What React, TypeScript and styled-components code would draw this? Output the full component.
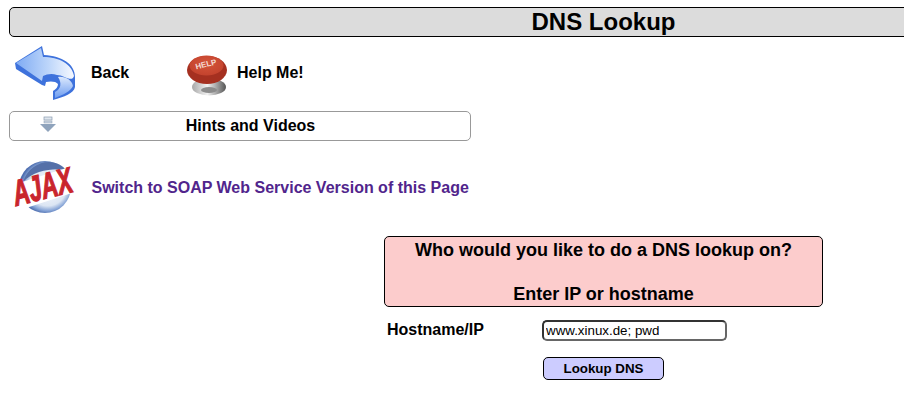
import React from 'react'
import styled, { createGlobalStyle } from 'styled-components'

const GlobalStyle = createGlobalStyle`
	html, body {
		margin: 0;
		padding: 0;
		overflow: hidden;
		background: #fff;
		font-family: "Liberation Sans", Arial, sans-serif;
		color: #000;
	}
`

const Page = styled.div`
	width: 1188px;
	height: 406px;
	padding: 7px 0 0 9px;
	box-sizing: content-box;
`

const TitleBar = styled.h1`
	box-sizing: border-box;
	margin: 0;
	height: 30px;
	padding-left: 1px;
	line-height: 28px;
	font-size: 24px;
	font-weight: bold;
	text-align: center;
	background: #dcdcdc;
	border: 1px solid #000;
	border-radius: 5px;
`

const NavRow = styled.div`
	display: flex;
	align-items: center;
	height: 56px;
	margin-top: 8px;
	padding-left: 5px;
`

const NavLink = styled.a<{ $width: number; $gap: number }>`
	display: flex;
	align-items: center;
	gap: ${(p) => p.$gap}px;
	width: ${(p) => p.$width}px;
	font-size: 16px;
	font-weight: bold;
	color: #000;
`

const HintsBar = styled.div`
	box-sizing: border-box;
	position: relative;
	width: 462px;
	height: 30px;
	margin-top: 10px;
	padding-left: 21px;
	border: 1px solid #999;
	border-radius: 5px;
	line-height: 28px;
	font-size: 16px;
	font-weight: bold;
	text-align: center;
`

const HintsIcon = styled.svg`
	position: absolute;
	left: 30px;
	top: 4px;
`

const SoapRow = styled.div`
	display: flex;
	align-items: center;
	gap: 14.5px;
	height: 60px;
	margin-top: 16px;
	padding-left: 5px;
`

const SoapLink = styled.a`
	margin-top: 1px;
	font-size: 16px;
	font-weight: bold;
	color: #51258c;
`

const FormArea = styled.form`
	display: grid;
	grid-template-columns: 158px auto;
	width: 439px;
	margin: 19px 0 0 375px;
`

const Prompt = styled.div`
	grid-column: 1 / -1;
	box-sizing: border-box;
	height: 71px;
	padding-top: 3px;
	background: #fccccc;
	border: 1px solid #000;
	border-radius: 5px;
	font-size: 18px;
	font-weight: bold;
	line-height: 21px;
	text-align: center;
`

const PromptGap = styled.div`
	height: 21px;
`

const PromptLine = styled.div`
	height: 21px;
	margin-top: 2px;
	&:first-child {
		margin-top: 0;
	}
`

const FieldLabel = styled.label`
	margin: 14px 0 0 3px;
	font-size: 16px;
	font-weight: bold;
	line-height: 18px;
`

const HostInput = styled.input`
	box-sizing: border-box;
	width: 185px;
	height: 21px;
	margin-top: 13px;
	padding: 0 2px;
	border: 2px solid #333;
	border-right-color: #666;
	border-bottom-color: #666;
	border-radius: 5px;
	font-family: "Liberation Sans", Arial, sans-serif;
	font-size: 13.33px;
	color: #000;
	outline: none;
`

const LookupButton = styled.button`
	grid-column: 2;
	box-sizing: border-box;
	width: 121px;
	height: 23px;
	margin: 16px 0 0 1px;
	padding: 0;
	background: #ccf;
	border: 1px solid #000;
	border-radius: 5px;
	font-family: "Liberation Sans", Arial, sans-serif;
	font-size: 13.33px;
	font-weight: bold;
	color: #000;
`

const HelpIcon = styled.svg`
	margin-top: 5px;
`

const AjaxIcon = styled.svg`
	overflow: visible;
`

const BackArrow = () => (
	<svg width="63" height="56" viewBox="0 0 63 56">
		<defs>
			<linearGradient id="arrowFace" x1="0" y1="0" x2="1" y2="0">
				<stop offset="0" stopColor="#7fabf3" />
				<stop offset="0.55" stopColor="#bcd5fa" />
				<stop offset="1" stopColor="#f6f9ff" />
			</linearGradient>
			<linearGradient id="arrowRibbon" x1="0" y1="0" x2="0" y2="1">
				<stop offset="0" stopColor="#dbe8fd" />
				<stop offset="1" stopColor="#6e9df0" />
			</linearGradient>
		</defs>
		{/* whole silhouette, the dark extruded side */}
		<path
			d="M1 18 L28 1 L30 10 C48 11 61 19 61 32 L61 42 C60 48 50 52 39 55 L39 46 C42 44 44 42 44 39 C42 36 36 36 32 37 L31 41 L28 40 L2 24 Z"
			fill="#3e72dc"
		/>
		{/* light top face */}
		<path
			d="M2 18 L27 3 L29 12 C45 12 58 19 60 31 C58 38 50 30 43 30 C38 28 33 29 29 31 L28 36 Z"
			fill="url(#arrowFace)"
		/>
		{/* inner ribbon of the tail */}
		<path
			d="M41 47 C47 44 48 38 44 32 C51 31 58 35 59 41 C57 46 49 50 41 53 Z"
			fill="url(#arrowRibbon)"
		/>
	</svg>
)

const HelpButton = () => (
	<HelpIcon width="42" height="41" viewBox="0 0 42 41">
		<defs>
			<radialGradient id="buttonTop" cx="0.5" cy="0.4" r="0.65">
				<stop offset="0" stopColor="#d4553b" />
				<stop offset="1" stopColor="#c2412c" />
			</radialGradient>
			<linearGradient id="buttonBase" x1="0" y1="0" x2="1" y2="0">
				<stop offset="0" stopColor="#a8a8a8" />
				<stop offset="0.45" stopColor="#f2f2f2" />
				<stop offset="1" stopColor="#555" />
			</linearGradient>
		</defs>
		<ellipse cx="22" cy="32" rx="17" ry="8.5" fill="url(#buttonBase)" />
		<ellipse cx="22" cy="35" rx="8" ry="3" fill="#8c8c8c" />
		<ellipse cx="20" cy="15" rx="20" ry="14" fill="#a53020" />
		<ellipse cx="19.5" cy="10.5" rx="17" ry="10" fill="url(#buttonTop)" />
		<text
			x="19"
			y="12"
			fontFamily="Liberation Sans, sans-serif"
			fontSize="8"
			fontWeight="bold"
			fill="#f4ddd6"
			textAnchor="middle"
			transform="rotate(-14 19 10)"
		>
			HELP
		</text>
	</HelpIcon>
)

const AjaxLogo = () => (
	<AjaxIcon width="63" height="56" viewBox="0 0 63 56">
		<defs>
			<radialGradient id="ajaxBall" cx="0.55" cy="0.5" r="0.52">
				<stop offset="0" stopColor="#ffffff" />
				<stop offset="0.7" stopColor="#dbe5f3" />
				<stop offset="0.88" stopColor="#86a4d6" />
				<stop offset="1" stopColor="#4f6fb0" />
			</radialGradient>
		</defs>
		<circle cx="31" cy="28" r="26" fill="url(#ajaxBall)" />
		<path d="M9 23 C13 10 24 3 35 3 C43 3 49 7 52 11 C40 9 20 11 9 23 Z" fill="#5570a8" />
		<path d="M0 45 L5 24 L62 6 L61 33 L6 51 Z" fill="#fff" />
		<g transform="translate(2 47) rotate(-14) scale(0.87 1.38)">
			<text
				x="0"
				y="0"
				fontFamily="Liberation Sans, sans-serif"
				fontSize="26"
				fontWeight="bold"
				fontStyle="italic"
				fill="#c9252d"
				stroke="#c9252d"
				strokeWidth="0.9"
			>
				AJAX
			</text>
		</g>
	</AjaxIcon>
)

export default function App() {
	return (
		<>
			<GlobalStyle />
			<Page>
				<TitleBar>DNS Lookup</TitleBar>
				<NavRow>
					<NavLink $width={173} $gap={14}>
						<BackArrow />
						Back
					</NavLink>
					<NavLink $width={140} $gap={8}>
						<HelpButton />
						Help Me!
					</NavLink>
				</NavRow>
				<HintsBar>
					<HintsIcon width="16" height="17" viewBox="0 0 16 17">
						<rect x="4" y="1" width="8" height="3" fill="#dfe6ee" stroke="#8a9bb0" strokeWidth="0.7" />
						<rect x="4" y="5" width="8" height="2" fill="#ccd6e2" stroke="#8a9bb0" strokeWidth="0.5" />
						<path d="M0 8 H16 L8 16 Z" fill="#8fa3bc" />
					</HintsIcon>
					Hints and Videos
				</HintsBar>
				<SoapRow>
					<AjaxLogo />
					<SoapLink>Switch to SOAP Web Service Version of this Page</SoapLink>
				</SoapRow>
				<FormArea>
					<Prompt>
						<PromptLine>Who would you like to do a DNS lookup on?</PromptLine>
						<PromptGap />
						<PromptLine>Enter IP or hostname</PromptLine>
					</Prompt>
					<FieldLabel>Hostname/IP</FieldLabel>
					<HostInput defaultValue="www.xinux.de; pwd" />
					<LookupButton type="button">Lookup DNS</LookupButton>
				</FormArea>
			</Page>
		</>
	)
}
